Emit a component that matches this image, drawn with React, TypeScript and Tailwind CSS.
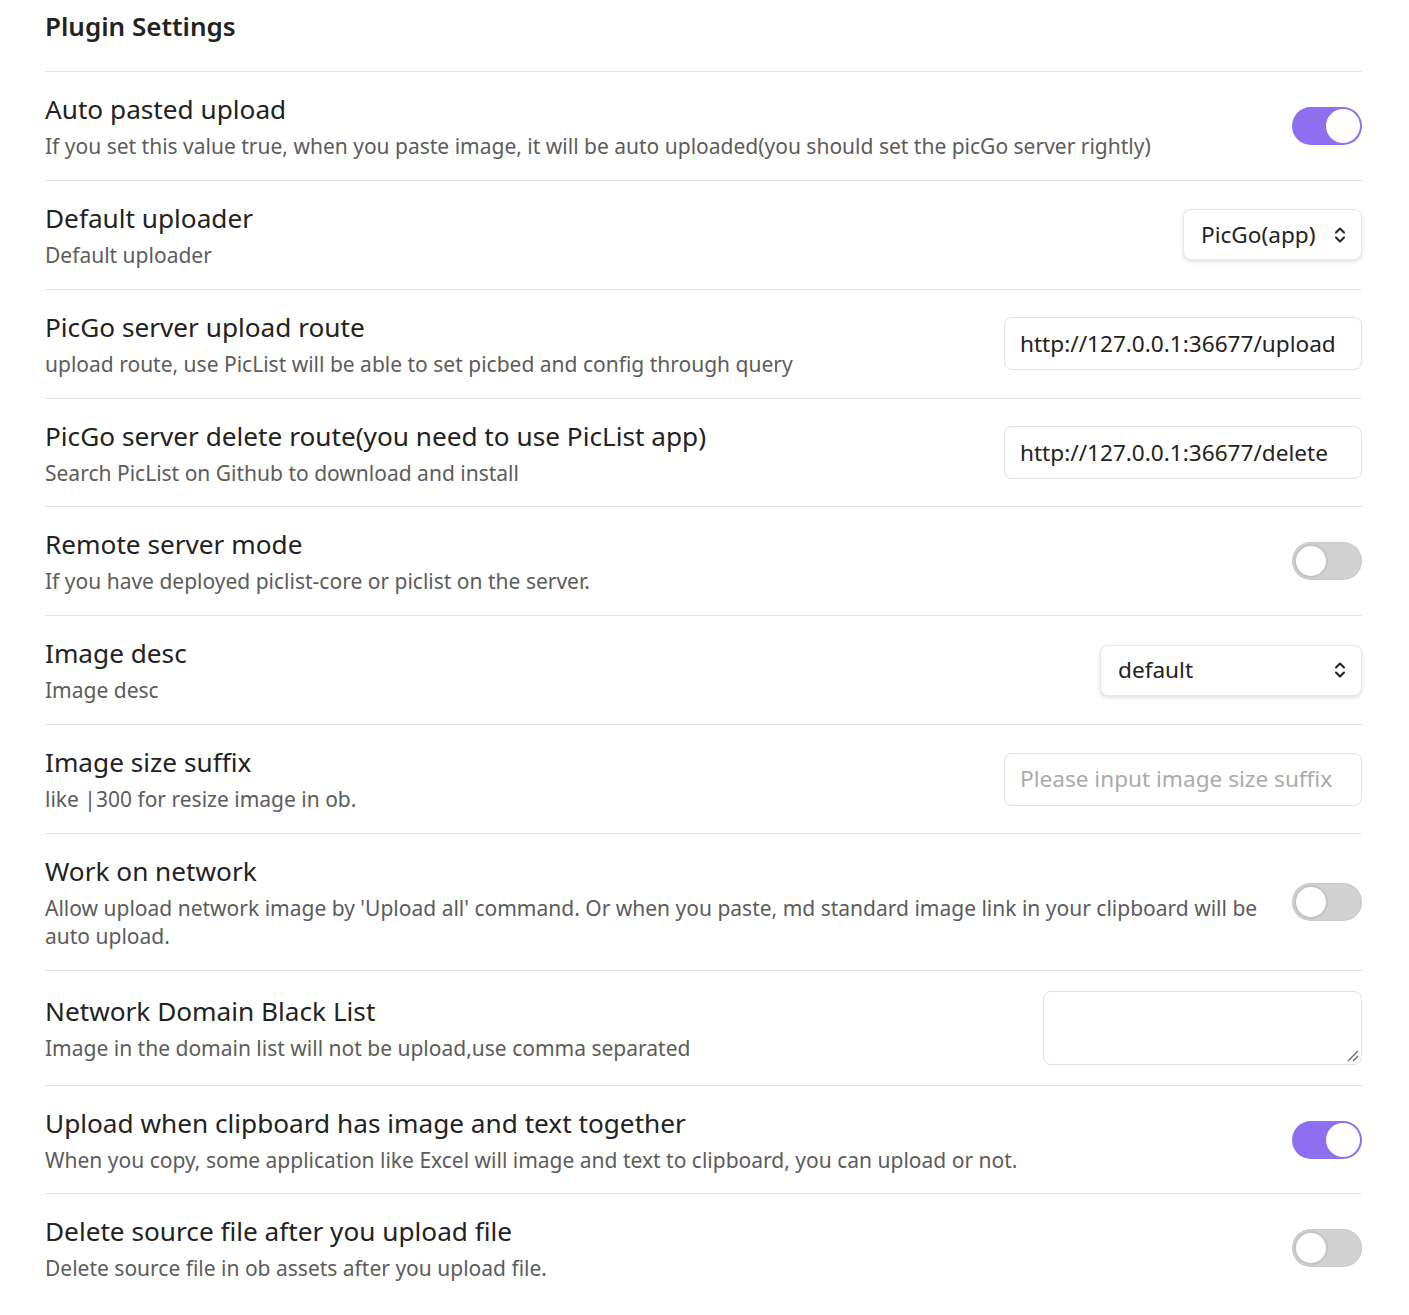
import React from 'react';

const FONT = '"Noto Sans", "Open Sans", sans-serif';

type Control =
  | { kind: 'toggle'; on: boolean }
  | { kind: 'select'; value: string; width: string }
  | { kind: 'input'; value?: string; placeholder?: string }
  | { kind: 'textarea' };

interface Setting {
  name: string;
  desc: string;
  control: Control;
}

const settings: Setting[] = [
  {
    name: 'Auto pasted upload',
    desc: 'If you set this value true, when you paste image, it will be auto uploaded(you should set the picGo server rightly)',
    control: { kind: 'toggle', on: true },
  },
  {
    name: 'Default uploader',
    desc: 'Default uploader',
    control: { kind: 'select', value: 'PicGo(app)', width: 'w-[179px]' },
  },
  {
    name: 'PicGo server upload route',
    desc: 'upload route, use PicList will be able to set picbed and config through query',
    control: { kind: 'input', value: 'http://127.0.0.1:36677/upload' },
  },
  {
    name: 'PicGo server delete route(you need to use PicList app)',
    desc: 'Search PicList on Github to download and install',
    control: { kind: 'input', value: 'http://127.0.0.1:36677/delete' },
  },
  {
    name: 'Remote server mode',
    desc: 'If you have deployed piclist-core or piclist on the server.',
    control: { kind: 'toggle', on: false },
  },
  {
    name: 'Image desc',
    desc: 'Image desc',
    control: { kind: 'select', value: 'default', width: 'w-[262px]' },
  },
  {
    name: 'Image size suffix',
    desc: 'like |300 for resize image in ob.',
    control: { kind: 'input', placeholder: 'Please input image size suffix' },
  },
  {
    name: 'Work on network',
    desc: "Allow upload network image by 'Upload all' command. Or when you paste, md standard image link in your clipboard will be auto upload.",
    control: { kind: 'toggle', on: false },
  },
  {
    name: 'Network Domain Black List',
    desc: 'Image in the domain list will not be upload,use comma separated',
    control: { kind: 'textarea' },
  },
  {
    name: 'Upload when clipboard has image and text together',
    desc: 'When you copy, some application like Excel will image and text to clipboard, you can upload or not.',
    control: { kind: 'toggle', on: true },
  },
  {
    name: 'Delete source file after you upload file',
    desc: 'Delete source file in ob assets after you upload file.',
    control: { kind: 'toggle', on: false },
  },
];

function Toggle({ on }: { on: boolean }) {
  return (
    <div
      className={`relative w-[70px] h-[38px] rounded-full flex-shrink-0 ${
        on ? 'bg-[#8e6ff0]' : 'bg-[#d2d2d2] shadow-[inset_0_0_2px_rgba(0,0,0,0.15)]'
      }`}
    >
      <div
        className={`absolute top-[2px] w-[34px] h-[34px] rounded-full bg-white ${
          on ? 'right-[2px]' : 'left-[2px] border-2 border-[#c4c4c4]'
        }`}
      />
    </div>
  );
}

function UpDown() {
  return (
    <svg width="14" height="22" viewBox="0 0 14 22" fill="none" stroke="#222" strokeWidth="2" strokeLinecap="round" strokeLinejoin="round">
      <path d="M3 8.5 L7 4.5 L11 8.5" />
      <path d="M3 13.5 L7 17.5 L11 13.5" />
    </svg>
  );
}

function SettingControl({ control }: { control: Control }) {
  if (control.kind === 'toggle') return <Toggle on={control.on} />;
  if (control.kind === 'select') {
    return (
      <div
        className={`${control.width} h-[51px] flex-shrink-0 flex items-center justify-between pl-[17px] pr-[14px] rounded-[8px] bg-white border border-[#e6e6e6] shadow-[0_2px_4px_rgba(0,0,0,0.12)] text-[22.6px] text-[#222]`}
      >
        <span>{control.value}</span>
        <UpDown />
      </div>
    );
  }
  if (control.kind === 'input') {
    return (
      <div className="w-[358px] h-[53px] flex-shrink-0 flex items-center px-[15px] rounded-[8px] bg-white border border-[#e0e0e0] text-[22.6px]">
        {control.value ? (
          <span className="text-[#222]">{control.value}</span>
        ) : (
          <span className="text-[#ababab]">{control.placeholder}</span>
        )}
      </div>
    );
  }
  return (
    <div className="relative w-[319px] h-[74px] flex-shrink-0 rounded-[8px] bg-white border border-[#e0e0e0]">
      <svg className="absolute right-[2px] bottom-[2px]" width="12" height="12" viewBox="0 0 12 12" stroke="#666" strokeWidth="1.3">
        <path d="M1 11 L11 1" />
        <path d="M6 11 L11 6" />
      </svg>
    </div>
  );
}

export default function App() {
  return (
    <div className="min-h-screen bg-white pl-[45px] pr-[47px]" style={{ fontFamily: FONT }}>
      <h2 className="pt-[6px] pb-[25px] text-[26px] leading-[40px] font-semibold text-[#222]">
        Plugin Settings
      </h2>
      {settings.map(s => (
        <div key={s.name} className="flex items-center gap-[24px] border-t border-[#e3e3e3] pt-[20px] pb-[19.85px]">
          <div className="flex-1 min-w-0">
            <div className="text-[26.2px] leading-[34px] text-[#222]">{s.name}</div>
            <div className="mt-[6px] text-[21px] leading-[28px] text-[#5c5c5c]">{s.desc}</div>
          </div>
          <SettingControl control={s.control} />
        </div>
      ))}
    </div>
  );
}
